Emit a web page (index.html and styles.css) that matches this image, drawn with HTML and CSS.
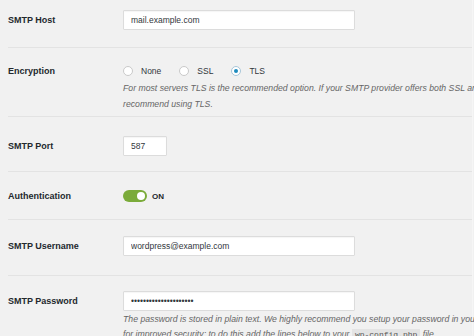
FILE: index.html
```html
<!DOCTYPE html>
<html>
    <head>
        <meta charset="UTF-8">
        <title>SMTP Settings</title>
        <link rel="stylesheet" href="styles.css">
    </head>
    <body>
        <div class="form-table">
            <div class="row row-host">
                <div class="label">SMTP Host</div>
                <div class="field">
                    <input class="text-input wide" type="text" value="mail.example.com">
                </div>
            </div>
            <div class="row row-enc">
                <div class="label">Encryption</div>
                <div class="field">
                    <div class="radios">
                        <label class="radio"><span class="dot"></span>None</label>
                        <label class="radio"><span class="dot"></span>SSL</label>
                        <label class="radio"><span class="dot checked"></span>TLS</label>
                    </div>
                    <p class="description">For most servers TLS is the recommended option. If your SMTP provider offers both SSL and<br>recommend using TLS.</p>
                </div>
            </div>
            <div class="row row-port">
                <div class="label">SMTP Port</div>
                <div class="field">
                    <input class="text-input small" type="text" value="587">
                </div>
            </div>
            <div class="row row-auth">
                <div class="label">Authentication</div>
                <div class="field">
                    <div class="toggle-wrap">
                        <span class="toggle"><span class="knob"></span></span>
                        <span class="toggle-text">ON</span>
                    </div>
                </div>
            </div>
            <div class="row row-user">
                <div class="label">SMTP Username</div>
                <div class="field">
                    <input class="text-input wide" type="text" value="wordpress@example.com">
                </div>
            </div>
            <div class="row row-pass">
                <div class="label">SMTP Password</div>
                <div class="field">
                    <input class="text-input wide" type="password" value="wordpresspassword1234">
                    <p class="description">The password is stored in plain text. We highly recommend you setup your password in your<br>for improved security; to do this add the lines below to your <code>wp-config.php</code> file.</p>
                </div>
            </div>
        </div>
    </body>
</html>
```

FILE: styles.css
```css
html, body {
    margin: 0;
    height: 100%;
    overflow: hidden;
    background-color: #f1f1f1;
    font-family: "Liberation Sans", Arial, sans-serif;
    color: #23282d;
}

.form-table {
    width: 464px;
    margin-left: 8px;
    border-right: 1px solid #f6f6f6;
}

.row {
    display: flex;
    align-items: flex-start;
    border-bottom: 1px solid #e3e3e3;
    white-space: nowrap;
}

.row-host { padding: 10px 0 17px 0; }
.row-enc { padding: 15px 0 4px 0; }
.row-port { padding: 19px 0 15px 0; }
.row-auth { padding: 16px 0 15px 0; }
.row-user { padding: 16px 0 19px 0; }
.row-pass { padding: 15px 0 0 0; border-bottom: none; }

.label {
    width: 115px;
    flex-shrink: 0;
    font-size: 9px;
    font-weight: bold;
    line-height: 20px;
}

.row-enc .label { line-height: 16px; }
.row-auth .label { line-height: 16px; }

.field {
    flex: 1;
}

.text-input {
    box-sizing: border-box;
    height: 20px;
    margin: 0;
    padding: 0 7px;
    border: 1px solid #dcdcdc;
    border-radius: 1px;
    background-color: white;
    font-family: "Liberation Sans", Arial, sans-serif;
    font-size: 8.5px;
    color: #32373c;
    box-shadow: inset 0 1px 1px rgba(0, 0, 0, 0.04);
    display: block;
}

.wide { width: 232px; }
.small { width: 44px; }

.radios {
    display: flex;
    height: 16px;
    align-items: center;
}

.radio {
    display: flex;
    align-items: center;
    font-size: 8.5px;
    color: #32373c;
    margin-right: 18px;
}

.dot {
    box-sizing: border-box;
    width: 10px;
    height: 10px;
    border-radius: 50%;
    border: 1px solid #c9c9c9;
    background-color: white;
    margin-right: 8px;
    display: flex;
    align-items: center;
    justify-content: center;
}

.dot.checked {
    border-color: #a8c6d8;
}

.dot.checked::after {
    content: "";
    width: 4px;
    height: 4px;
    border-radius: 50%;
    background-color: #1e8cbe;
}

.description {
    margin: 1px 0 0 0;
    font-size: 8.7px;
    font-style: italic;
    line-height: 16px;
    color: #666;
}

.row-pass .description {
    line-height: 15px;
}

.description code {
    font-family: "Liberation Mono", monospace;
    font-style: normal;
    font-size: 8px;
    background-color: #e4e4e4;
    padding: 1px 3px;
    color: #555;
}

.toggle-wrap {
    display: flex;
    align-items: center;
    height: 16px;
}

.toggle {
    box-sizing: border-box;
    width: 24px;
    height: 12px;
    border-radius: 6px;
    background-color: #7bab3a;
    display: flex;
    align-items: center;
    justify-content: flex-end;
    padding-right: 2px;
    margin-right: 5px;
}

.knob {
    width: 8px;
    height: 8px;
    border-radius: 50%;
    background-color: white;
}

.toggle-text {
    font-size: 8px;
    font-weight: bold;
}
```
